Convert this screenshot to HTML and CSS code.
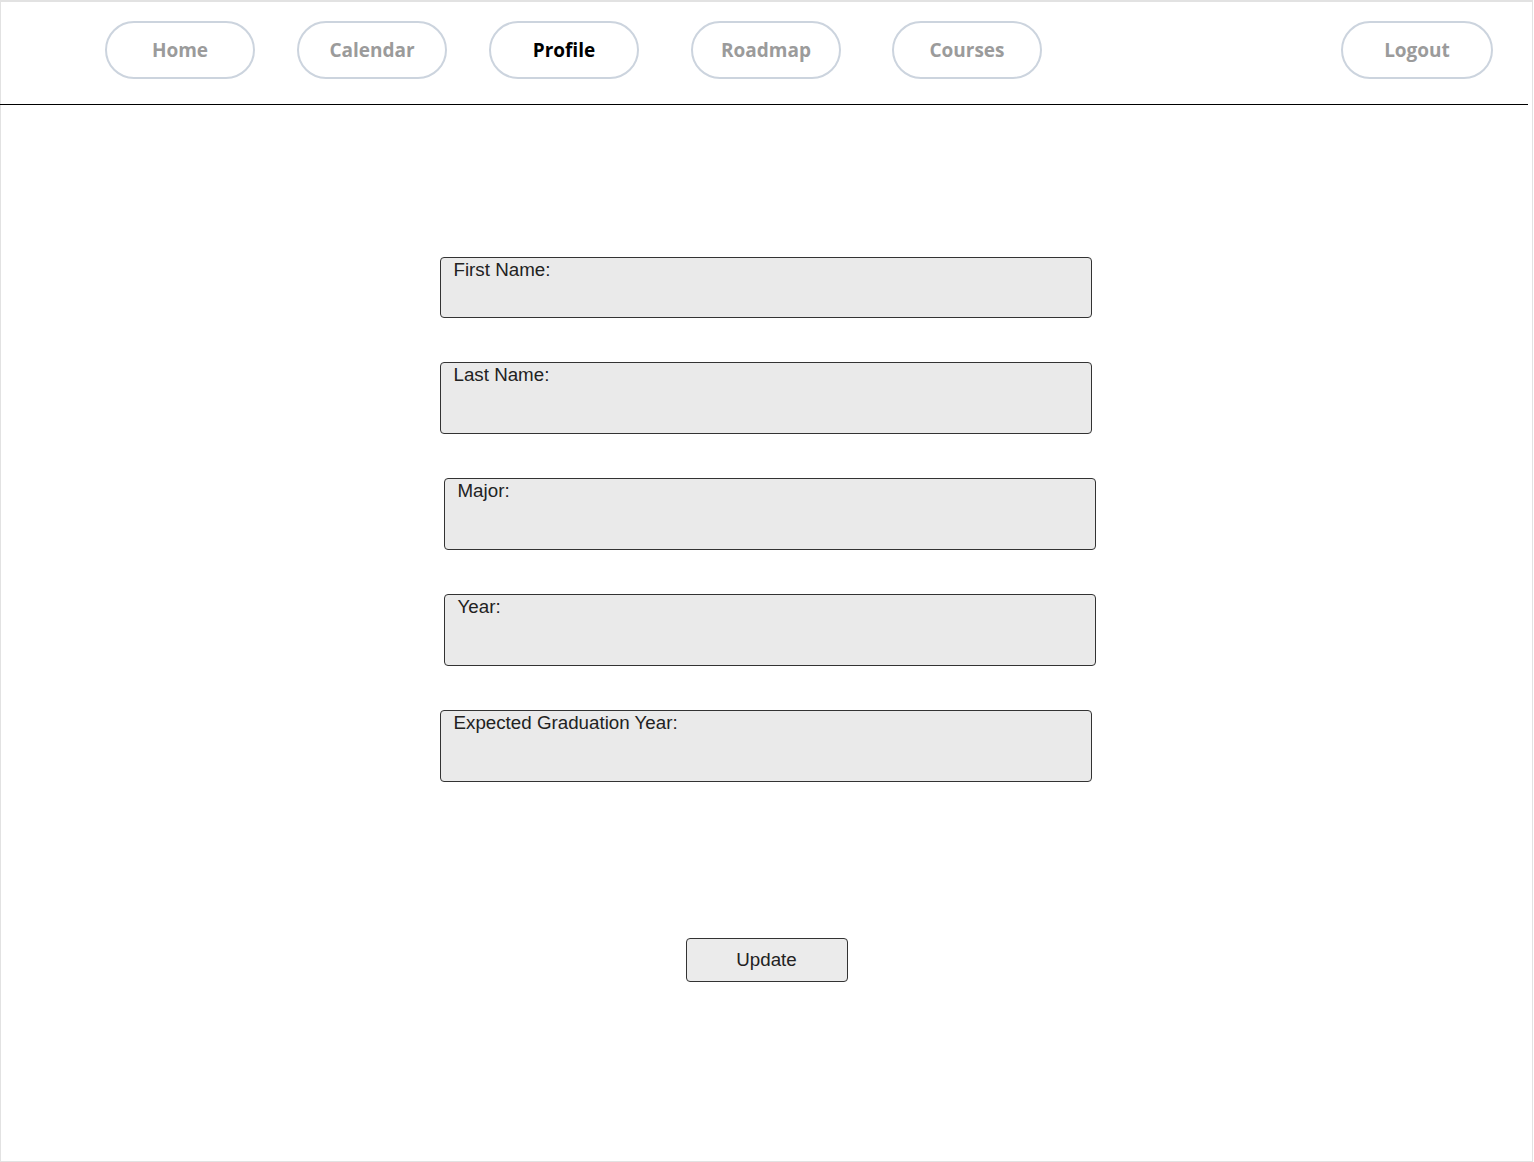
FILE: index.html
```html
<!DOCTYPE html>
<html lang="en">
<head>
<meta charset="utf-8">
<title>Profile</title>
<link rel="stylesheet" href="styles.css">
</head>
<body>
<div class="page">
  <header class="header">
    <nav class="nav">
      <a class="nav-btn" href="#">Home</a>
      <a class="nav-btn" href="#">Calendar</a>
      <a class="nav-btn active" href="#">Profile</a>
      <a class="nav-btn roadmap" href="#">Roadmap</a>
      <a class="nav-btn courses" href="#">Courses</a>
      <a class="nav-btn logout" href="#">Logout</a>
    </nav>
  </header>
  <main class="main">
    <form class="profile-form">
      <div class="field short"><label class="field-label">First Name:</label></div>
      <div class="field"><label class="field-label">Last Name:</label></div>
      <div class="field shifted"><label class="field-label">Major:</label></div>
      <div class="field shifted"><label class="field-label">Year:</label></div>
      <div class="field"><label class="field-label">Expected Graduation Year:</label></div>
    </form>
    <button class="update-btn" type="button">Update</button>
  </main>
</div>
</body>
</html>
```

FILE: styles.css
```css
html, body {
  margin: 0;
  padding: 0;
  background: #ffffff;
}

.page {
  box-sizing: border-box;
  width: 1533px;
  height: 1162px;
  border-top: 2px solid #e2e2e2;
  border-left: 1px solid #e2e2e2;
  border-right: 1px solid #e2e2e2;
  border-bottom: 1px solid #e2e2e2;
  display: flex;
  flex-direction: column;
}

.header {
  height: 102px;
  margin-left: -1px;
  margin-right: 4px;
  border-bottom: 1px solid #000000;
  box-sizing: content-box;
}

.nav {
  display: flex;
  align-items: flex-start;
  gap: 42px;
  padding: 19px 35px 0 105px;
}

.nav-btn {
  box-sizing: border-box;
  width: 150px;
  height: 58px;
  border: 2px solid #ccd4de;
  border-radius: 29px;
  display: flex;
  align-items: center;
  justify-content: center;
  font-family: "Open Sans", sans-serif;
  font-weight: 700;
  font-size: 19px;
  color: #9b9b9b;
  text-decoration: none;
}

.nav-btn.active {
  color: #000000;
}

.nav-btn.roadmap {
  margin-left: 10px;
}

.nav-btn.courses {
  margin-left: 9px;
}

.nav-btn.logout {
  width: 152px;
  margin-left: auto;
}

.main {
  display: flex;
  flex-direction: column;
  align-items: center;
  padding-top: 152px;
}

.profile-form {
  width: 652px;
  margin-left: -2px;
  display: flex;
  flex-direction: column;
  gap: 44px;
}

.field {
  box-sizing: border-box;
  height: 72px;
  border: 1px solid #333333;
  border-radius: 4px;
  background: #eaeaea;
  padding: 1px 13px 0;
}

.field.short {
  height: 61px;
}

.field.shifted {
  margin-left: 4px;
  margin-right: -4px;
}

.field-label {
  display: block;
  font-family: "Liberation Sans", Arial, sans-serif;
  font-size: 18.75px;
  color: #222222;
}

.update-btn {
  box-sizing: border-box;
  margin-top: 156px;
  width: 162px;
  height: 44px;
  border: 1px solid #333333;
  border-radius: 4px;
  background: #ebebeb;
  font-family: "Liberation Sans", Arial, sans-serif;
  font-size: 18.75px;
  color: #222222;
  padding: 0;
}
```
